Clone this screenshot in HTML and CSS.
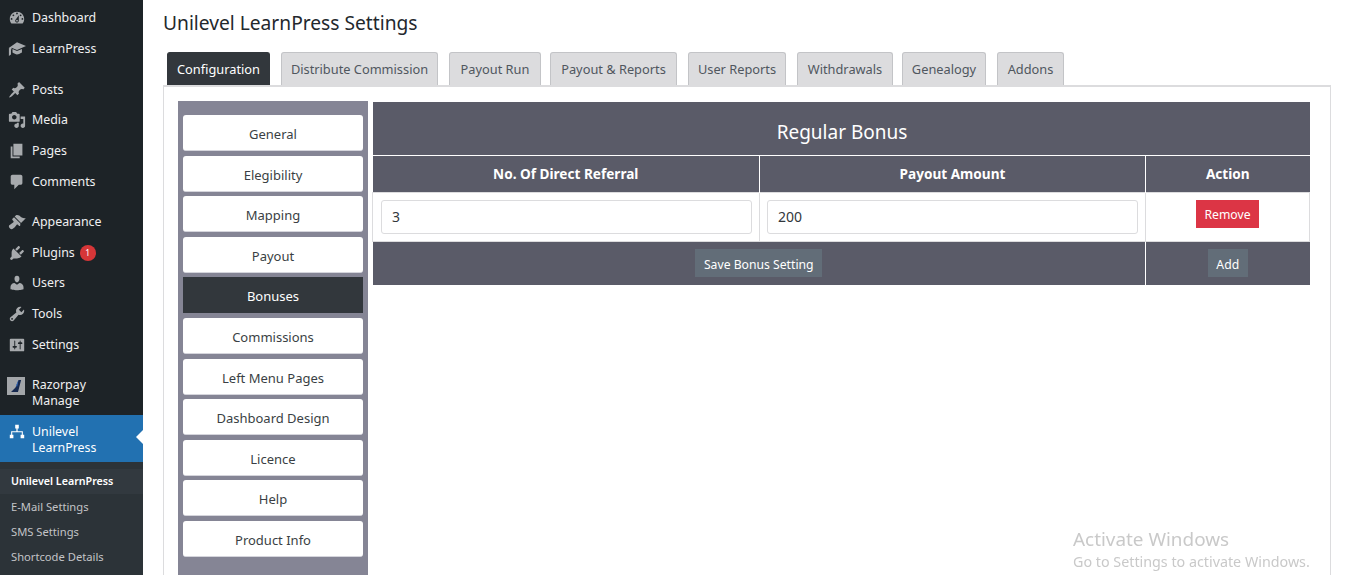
FILE: index.html
```html
<!DOCTYPE html>
<html lang="en">
<head>
<meta charset="utf-8">
<title>Unilevel LearnPress Settings</title>
<link rel="stylesheet" href="styles.css">
</head>
<body>
<div class="page">
  <aside class="sidebar">
    <ul class="menu">
      <li class="item"><svg class="ico" viewBox="0 0 20 20"><path d="M3.76 16h12.48c1.1-1.37 1.76-3.11 1.76-5 0-4.42-3.58-8-8-8s-8 3.58-8 8c0 1.89.66 3.63 1.76 5zM10 4c.55 0 1 .45 1 1s-.45 1-1 1-1-.45-1-1 .45-1 1-1zM6 6c.55 0 1 .45 1 1s-.45 1-1 1-1-.45-1-1 .45-1 1-1zm8 0c.55 0 1 .45 1 1s-.45 1-1 1-1-.45-1-1 .45-1 1-1zm-5.37 5.55L12 7v6c0 1.1-.9 2-2 2s-2-.9-2-2c0-.57.24-1.08.63-1.45zM4 10c.55 0 1 .45 1 1s-.45 1-1 1-1-.45-1-1 .45-1 1-1zm12 0c.55 0 1 .45 1 1s-.45 1-1 1-1-.45-1-1 .45-1 1-1zm-5 3c0-.55-.45-1-1-1s-1 .45-1 1 .45 1 1 1 1-.45 1-1z" fill-rule="evenodd"/></svg><span>Dashboard</span></li>
      <li class="item"><svg class="ico" viewBox="0 0 20 20"><path d="M10 2.5 20 6.8 10 11 4 8.6V10.5L.8 9zM3.3 10V16L1 17.8V9.3zM5 10 10 12.2 15.5 10V14C13 15.5 11.5 16 10 16S7 15.2 5 14z"/></svg><span>LearnPress</span></li>
      <li class="sep"></li>
      <li class="item"><svg class="ico" viewBox="0 0 20 20"><path d="M10.44 3.02l1.82-1.82 6.36 6.35-1.83 1.82c-1.05-.68-2.48-.57-3.41.36l-.75.75c-.92.93-1.04 2.35-.35 3.41l-1.83 1.82-2.41-2.41-2.8 2.79c-.42.42-3.38 2.71-3.8 2.29s1.86-3.39 2.28-3.81l2.79-2.79L4.1 9.36l1.83-1.82c1.05.69 2.48.57 3.4-.36l.75-.75c.93-.92 1.05-2.35.36-3.41z"/></svg><span>Posts</span></li>
      <li class="item"><svg class="ico" viewBox="0 0 20 20"><path d="M13 11V4c0-.55-.45-1-1-1h-1.67L9 1H5L3.67 3H2c-.55 0-1 .45-1 1v7c0 .55.45 1 1 1h10c.55 0 1-.45 1-1zM7 4.5c1.38 0 2.5 1.12 2.5 2.5S8.38 9.5 7 9.5 4.5 8.38 4.5 7 5.62 4.5 7 4.5zM14 6h5v10.5c0 1.38-1.12 2.5-2.5 2.5S14 17.88 14 16.5s1.12-2.5 2.5-2.5c.17 0 .34.02.5.05V9h-3V6zm-4 8.05V13h2v3.5c0 1.38-1.12 2.5-2.5 2.5S7 17.88 7 16.5 8.12 14 9.5 14c.17 0 .34.02.5.05z"/></svg><span>Media</span></li>
      <li class="item"><svg class="ico" viewBox="0 0 20 20"><path d="M6 15V2h10v13H6zm-1 1h8v2H3V5h2v11z"/></svg><span>Pages</span></li>
      <li class="item"><svg class="ico" viewBox="0 0 20 20"><path d="M5 2h9c1.1 0 2 .9 2 2v7c0 1.1-.9 2-2 2h-2l-5 5v-5H5c-1.1 0-2-.9-2-2V4c0-1.1.9-2 2-2z"/></svg><span>Comments</span></li>
      <li class="sep"></li>
      <li class="item"><svg class="ico" viewBox="0 0 20 20"><path d="M14.48 11.06L7.41 3.99l1.5-1.5c.5-.56 2.3-.47 3.51.32 1.21.8 1.43 1.28 2.91 2.1 1.18.64 2.45 1.26 4.45.85zm-.71.71L6.7 4.7 4.93 6.47c-.39.39-.39 1.02 0 1.41l1.06 1.06c.39.39.39 1.03 0 1.42-.6.6-1.43 1.11-2.21 1.69-.35.26-.7.53-1.01.84C1.43 13.23 0 15 2 17c1.98 2 3.75.57 5.11-.77.31-.31.58-.66.84-1.01.58-.78 1.09-1.61 1.69-2.21.39-.39 1.02-.39 1.41 0l1.06 1.06c.39.39 1.02.39 1.41 0z"/></svg><span>Appearance</span></li>
      <li class="item"><svg class="ico" viewBox="0 0 20 20"><path d="M13.11 4.36L9.87 7.6 8 5.73l3.24-3.24c.35-.34 1.05-.2 1.56.32.52.51.66 1.21.31 1.55zm-8 1.77l.91-1.12 9.01 9.01-1.19.84c-.71.71-2.63 1.16-3.82 1.16H6.14L4.9 17.26c-.59.59-1.54.59-2.12 0-.59-.58-.59-1.53 0-2.12l1.24-1.24v-3.88c0-1.13.4-3.19 1.09-3.89zm7.26 3.97l3.24-3.24c.34-.35 1.04-.21 1.55.31.52.51.66 1.21.31 1.55l-3.24 3.25z"/></svg><span>Plugins</span><b class="badge">1</b></li>
      <li class="item"><svg class="ico" viewBox="0 0 20 20"><path d="M10 9.25c-2.27 0-2.73-3.44-2.73-3.44C7 4.02 7.82 2 9.97 2c2.16 0 2.98 2.02 2.71 3.81 0 0-.41 3.44-2.68 3.44zm0 2.57L12.72 10c2.39 0 4.52 2.33 4.52 4.53v2.49s-3.65 1.13-7.24 1.13c-3.65 0-7.24-1.13-7.24-1.13v-2.49c0-2.25 1.94-4.48 4.47-4.48z"/></svg><span>Users</span></li>
      <li class="item"><svg class="ico" viewBox="0 0 20 20"><path d="M16.68 9.77c-1.34 1.34-3.3 1.67-4.95.99l-5.41 6.52c-.99.99-2.59.99-3.58 0s-.99-2.59 0-3.57l6.52-5.42c-.68-1.65-.35-3.61.99-4.95 1.28-1.28 3.12-1.62 4.72-1.06l-2.89 2.89 2.82 2.82 2.86-2.87c.53 1.58.18 3.39-1.08 4.65zM3.81 16.21c.4.39 1.04.39 1.43 0 .4-.4.4-1.04 0-1.43-.39-.4-1.03-.4-1.43 0-.39.39-.39 1.03 0 1.43z"/></svg><span>Tools</span></li>
      <li class="item"><svg class="ico" viewBox="0 0 20 20"><path d="M18 16V4c0-.55-.45-1-1-1H3c-.55 0-1 .45-1 1v12c0 .55.45 1 1 1h14c.55 0 1-.45 1-1zM8 11h1c.55 0 1 .45 1 1s-.45 1-1 1H8v1.5c0 .28-.22.5-.5.5s-.5-.22-.5-.5V13H6c-.55 0-1-.45-1-1s.45-1 1-1h1V5.5c0-.28.22-.5.5-.5s.5.22.5.5V11zm5-2h-1c-.55 0-1-.45-1-1s.45-1 1-1h1V5.5c0-.28.22-.5.5-.5s.5.22.5.5V7h1c.55 0 1 .45 1 1s-.45 1-1 1h-1v5.5c0 .28-.22.5-.5.5s-.5-.22-.5-.5V9z"/></svg><span>Settings</span></li>
      <li class="sep"></li>
      <li class="item two razor"><svg class="logo" viewBox="0 0 18 18"><rect width="18" height="18" fill="#a3a6a9"/><path d="M11.5 3h2.6L11 15H4L8.5 10.5z" fill="#16294f"/><path d="M9 8.5 11.5 3 10 10z" fill="#3a6fc0"/></svg><span>Razorpay<br>Manage</span></li>
      <li class="item two current"><svg class="ico" viewBox="0 0 20 20"><path d="M8 2h4v4h-1.3v3.2H16.5V13H18v4h-4v-4h1.3v-2.6H4.7V13H6v4H2v-4h1.5V9.2h5.8V6H8z"/></svg><span>Unilevel<br>LearnPress</span></li>
    </ul>
    <ul class="submenu">
      <li class="sub active">Unilevel LearnPress</li>
      <li class="sub">E-Mail Settings</li>
      <li class="sub">SMS Settings</li>
      <li class="sub">Shortcode Details</li>
    </ul>
  </aside>

  <main class="main">
    <h1 class="title">Unilevel LearnPress Settings</h1>
    <nav class="tabs">
      <a class="tab on">Configuration</a>
      <a class="tab">Distribute Commission</a>
      <a class="tab">Payout Run</a>
      <a class="tab">Payout &amp; Reports</a>
      <a class="tab">User Reports</a>
      <a class="tab">Withdrawals</a>
      <a class="tab">Genealogy</a>
      <a class="tab">Addons</a>
    </nav>
    <section class="panel">
      <div class="side">
        <a class="btn">General</a>
        <a class="btn">Elegibility</a>
        <a class="btn">Mapping</a>
        <a class="btn">Payout</a>
        <a class="btn dark">Bonuses</a>
        <a class="btn">Commissions</a>
        <a class="btn">Left Menu Pages</a>
        <a class="btn">Dashboard Design</a>
        <a class="btn">Licence</a>
        <a class="btn">Help</a>
        <a class="btn">Product Info</a>
      </div>
      <table class="bonus">
        <colgroup><col class="c1"><col class="c2"><col class="c3"></colgroup>
        <thead>
          <tr class="cap"><th colspan="3">Regular Bonus</th></tr>
          <tr class="head"><th>No. Of Direct Referral</th><th>Payout Amount</th><th>Action</th></tr>
        </thead>
        <tbody>
          <tr class="row">
            <td><input class="field" type="text" value="3"></td>
            <td><input class="field" type="text" value="200"></td>
            <td class="mid"><button class="act red">Remove</button></td>
          </tr>
        </tbody>
        <tfoot>
          <tr class="foot">
            <td colspan="2" class="mid"><button class="act slate">Save Bonus Setting</button></td>
            <td class="mid"><button class="act slate">Add</button></td>
          </tr>
        </tfoot>
      </table>
    </section>
  </main>
</div>
<div class="activate">
  <div class="a1">Activate Windows</div>
  <div class="a2">Go to Settings to activate Windows.</div>
</div>
</body>
</html>
```
FILE: styles.css
```css
* { box-sizing: border-box; }
html, body { margin: 0; padding: 0; height: 575px; overflow: hidden; background: #fff; }
body { font-family: "Noto Sans", "Open Sans", sans-serif; color: #212529; }
ul { list-style: none; margin: 0; padding: 0; }

.page { display: flex; height: 575px; overflow: hidden; }

.sidebar { width: 143px; flex: none; background: #1d2327; height: 575px; display: flex; flex-direction: column; color: #f0f0f1; }
.menu { padding-top: 3px; }
.item { display: flex; align-items: center; height: 30.7px; padding-left: 8px; font-size: 12.4px; line-height: 16px; position: relative; }
.item span { margin-left: 6px; }
.item.two { height: 47px; }
.item.razor { height: 45.1px; padding-top: 1px; }
.ico { width: 18px; height: 18px; fill: #a7aaad; flex: none; }
.logo { width: 18px; height: 18px; flex: none; margin-top: -14px; margin-left: -1px; margin-right: 1px; }
.item.two .ico { margin-top: -16px; }
.sep { height: 9.8px; }
.current { background: #2271b1; color: #fff; padding-top: 2px; }
.current .ico { fill: #fff; }
.current::after { content: ""; position: absolute; right: 0; top: 15px; border: 7.5px solid transparent; border-right-color: #fff; border-left-width: 0; }
.badge { display: inline-block; width: 16px; height: 16px; margin-left: 5px; border-radius: 50%; background: #d63638; color: #fff; font-size: 8.5px; font-weight: 400; line-height: 16px; text-align: center; }
.submenu { flex: 1; background: #2c3338; padding-top: 7px; }
.sub { height: 25px; padding-left: 11px; font-size: 11.2px; line-height: 25px; color: #c3c4c7; }
.sub.active { color: #fff; font-weight: 600; font-size: 10.7px; background: #32393f; }

.main { flex: 1; min-width: 0; padding-left: 20px; padding-right: 19px; }
.title { margin: 0; padding-top: 9px; height: 52px; font-size: 19.2px; line-height: 27px; font-weight: 400; color: #23282d; }
.tabs { display: flex; padding-left: 4px; height: 33px; align-items: flex-end; }
.tab { height: 33px; margin-right: 11px; background: #dcdcde; border: 1px solid #c3c4c7; border-bottom: 0; border-radius: 3px 3px 0 0; font-size: 12.8px; line-height: 33px; text-align: center; color: #50575e; white-space: nowrap; }
.tab:nth-child(1) { width: 103px; }
.tab:nth-child(2) { width: 157px; }
.tab:nth-child(3) { width: 92px; margin-right: 9px; }
.tab:nth-child(4) { width: 127px; }
.tab:nth-child(5) { width: 98px; }
.tab:nth-child(6) { width: 96px; margin-right: 9px; }
.tab:nth-child(7) { width: 84px; }
.tab:nth-child(8) { width: 67px; }
.tab.on { background: #32373c; border-color: #32373c; color: #fff; }
.panel { display: flex; align-items: flex-start; height: 500px; padding: 14px 20px 0 14px; border: 1px solid #dcdcde; border-top: 2px solid #dcdcde; border-bottom: 0; }

.side { width: 190px; flex: none; background: #858595; padding: 14px 5px 17px; display: flex; flex-direction: column; gap: 4.6px; height: 475px; }
.btn { display: block; height: 36px; background: #fff; border-radius: 3px; border-bottom: 1px solid #d5d5dc; text-align: center; font-size: 13px; line-height: 38.4px; color: #3a3f44; }
.btn.dark { background: #32373c; color: #fff; border-color: #32373c; border-radius: 0; }

.bonus { width: 937px; flex: none; border-collapse: collapse; table-layout: fixed; margin: 1px 0 0 4px; font-size: 13px; }
.c1 { width: 387px; }
.c2 { width: 386px; }
.c3 { width: 164px; }
.bonus th { background: #5a5b68; color: #fff; border: 1px solid #fff; font-weight: 700; }
.bonus td { border: 1px solid #dcdcde; }
.cap th { height: 53px; padding: 7px 0 0 2px; font-size: 19px; font-weight: 400; border: 0; border-bottom: 1px solid #fff; }
.head th { height: 37px; font-size: 13.6px; border-top: 0; border-bottom: 0; }
.head th:first-child, .head th:last-child { border-left: 0; border-right: 0; }
.row td { height: 49px; padding: 0 7px; vertical-align: middle; }
.row td:first-child { padding-left: 8px; }
.field { display: block; width: 100%; height: 34px; padding: 0 10px; border: 1px solid #dcdcde; border-radius: 3px; background: #fff; font: 14px "Noto Sans", sans-serif; color: #32373c; }
.mid { text-align: center; }
.row .mid { vertical-align: top; padding-top: 7px; }
.foot td { background: #5a5b68; height: 44px; border: 0; border-right: 1px solid #fff; padding: 7px 0 0; vertical-align: top; }
.foot td:last-child { border-right: 0; }
.act { height: 28px; padding: 2px 8.6px 0; border: 0; font: 12.2px/26px "Noto Sans", sans-serif; color: #fff; }
.red { background: #dc3545; }
.slate { background: #626d78; padding: 3px 8.5px 0; }

.activate { position: fixed; left: 1073px; top: 527px; color: #c9c9c9; white-space: nowrap; }
.a1 { font-size: 18.9px; line-height: 24px; }
.a2 { font-size: 14.3px; line-height: 21px; }
```
